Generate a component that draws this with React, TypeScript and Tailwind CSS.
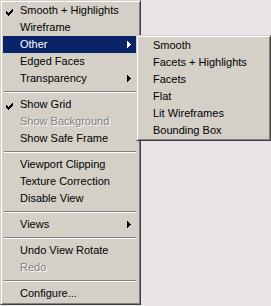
import type { ReactNode } from 'react';

type Item =
  | { kind: 'sep' }
  | { kind: 'item'; label: string; checked?: boolean; disabled?: boolean; sub?: boolean; active?: boolean };

const mainItems: Item[] = [
  { kind: 'item', label: 'Smooth + Highlights', checked: true },
  { kind: 'item', label: 'Wireframe' },
  { kind: 'item', label: 'Other', sub: true, active: true },
  { kind: 'item', label: 'Edged Faces' },
  { kind: 'item', label: 'Transparency', sub: true },
  { kind: 'sep' },
  { kind: 'item', label: 'Show Grid', checked: true },
  { kind: 'item', label: 'Show Background', disabled: true },
  { kind: 'item', label: 'Show Safe Frame' },
  { kind: 'sep' },
  { kind: 'item', label: 'Viewport Clipping' },
  { kind: 'item', label: 'Texture Correction' },
  { kind: 'item', label: 'Disable View' },
  { kind: 'sep' },
  { kind: 'item', label: 'Views', sub: true },
  { kind: 'sep' },
  { kind: 'item', label: 'Undo View Rotate' },
  { kind: 'item', label: 'Redo', disabled: true },
  { kind: 'sep' },
  { kind: 'item', label: 'Configure...' },
];

const subItems = ['Smooth', 'Facets + Highlights', 'Facets', 'Flat', 'Lit Wireframes', 'Bounding Box'];

// classic 7x7 pixel check mark
function Check() {
  const px: [number, number][] = [
    [6, 0], [5, 1], [6, 1], [0, 2], [4, 2], [5, 2], [6, 2],
    [0, 3], [1, 3], [3, 3], [4, 3], [5, 3],
    [0, 4], [1, 4], [2, 4], [3, 4], [4, 4],
    [1, 5], [2, 5], [3, 5], [2, 6],
  ];
  return (
    <svg width="7" height="7" viewBox="0 0 7 7" shapeRendering="crispEdges" className="absolute left-[3px] top-[7px]">
      {px.map(([x, y]) => (
        <rect key={`${x}-${y}`} x={x} y={y} width="1" height="1" fill="#000" />
      ))}
    </svg>
  );
}

function Arrow({ white }: { white?: boolean }) {
  return (
    <svg width="4" height="7" viewBox="0 0 4 7" shapeRendering="crispEdges" className="absolute left-[124px] top-[5px]">
      <path d="M0 0h1v7h-1zM1 1h1v5h-1zM2 2h1v3h-1zM3 3h1v1h-1z" fill={white ? '#fff' : '#000'} />
    </svg>
  );
}

function Frame({ children, className }: { children: ReactNode; className?: string }) {
  return (
    <div
      className={`bg-[#d4d0c8] border border-t-[#d4d0c8] border-l-[#d4d0c8] border-r-[#404040] border-b-[#404040] p-[1px] shadow-[inset_1px_1px_0_#ffffff,inset_-1px_-1px_0_#808080] ${className ?? ''}`}
    >
      {children}
    </div>
  );
}

export default function App() {
  return (
    <div className="relative w-[271px] h-[306px] overflow-hidden bg-[#e8e4e8] text-[11px] leading-[17px] text-black [font-family:'Liberation_Sans',Arial,sans-serif]">
      <Frame className="w-[141px] pl-[2px] pr-[3px] pb-[2px]">
        {mainItems.map((it, i) =>
          it.kind === 'sep' ? (
            <div key={i} className="h-[9px] flex flex-col justify-center px-[1px]">
              <div className="h-[1px] bg-[#808080]" />
              <div className="h-[1px] bg-white" />
            </div>
          ) : (
            <div
              key={i}
              className={`relative h-[17px] pl-[17px] whitespace-nowrap ${it.active ? 'bg-[#0a246a] text-white' : ''} ${
                it.disabled ? 'text-[#808080] [text-shadow:1px_1px_0_#ffffff]' : ''
              }`}
            >
              {it.checked && <Check />}
              {it.label}
              {it.sub && <Arrow white={it.active} />}
            </div>
          ),
        )}
      </Frame>

      <Frame className="absolute left-[136px] top-[35px] w-[135px] pl-[2px]">
        {subItems.map(s => (
          <div key={s} className="h-[17px] pl-[14px] whitespace-nowrap">
            {s}
          </div>
        ))}
      </Frame>
    </div>
  );
}
